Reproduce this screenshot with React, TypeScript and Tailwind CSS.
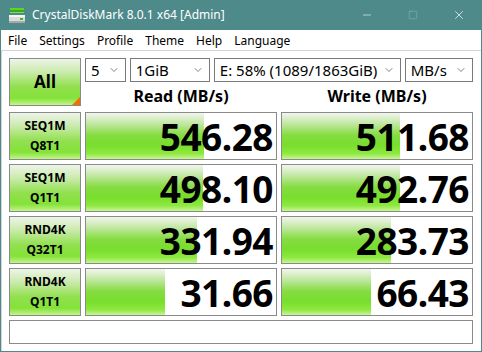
import { ChevronDown, Minus, Square, X } from "lucide-react"

const FONT = "font-['Segoe_UI','Noto_Sans','Open_Sans',sans-serif]"

interface Row {
  l1: string
  l2: string
  read: string
  write: string
  readPct: number
  writePct: number
}

const ROWS: Row[] = [
  { l1: "SEQ1M", l2: "Q8T1", read: "546.28", write: "511.68", readPct: 62, writePct: 62 },
  { l1: "SEQ1M", l2: "Q1T1", read: "498.10", write: "492.76", readPct: 61.5, writePct: 62 },
  { l1: "RND4K", l2: "Q32T1", read: "331.94", write: "283.73", readPct: 58.5, writePct: 57.5 },
  { l1: "RND4K", l2: "Q1T1", read: "31.66", write: "66.43", readPct: 41.5, writePct: 47 },
]

const GREEN_BAR =
  "bg-[linear-gradient(to_bottom,#f2f6ef_0%,#c4e8a6_22%,#86dc42_48%,#78de2c_70%,#8ee840_88%,#c8f596_100%)]"
const GREEN_LABEL =
  "bg-[linear-gradient(to_bottom,#eef4ea_0%,#c8eaa8_30%,#92e050_60%,#84e238_85%,#c4f48e_100%)]"

function Drop({ text, w }: { text: string; w: string }) {
  return (
    <div
      className={`${w} h-[24px] border border-[#7a7a7a] bg-white flex items-center justify-between pl-[5px] pr-[5px] text-[15px] text-black`}
    >
      <span className="leading-none">{text}</span>
      <ChevronDown className="w-[12px] h-[12px] text-[#555]" strokeWidth={1.5} />
    </div>
  )
}

function Cell({ value, pct }: { value: string; pct: number }) {
  return (
    <div className="relative h-[48px] border border-[#8a8a8a] bg-white">
      <div className={`absolute left-0 top-0 bottom-0 ${GREEN_BAR}`} style={{ width: `${pct}%` }} />
      <div className="relative h-full flex items-center justify-end pr-[3px] pt-[2px] text-[37px] font-bold text-black leading-[44px] tracking-[-0.5px]">
        {value}
      </div>
    </div>
  )
}

function DiskIcon() {
  return (
    <svg width="17" height="17" viewBox="0 0 17 17">
      <rect x="1" y="1" width="14" height="2" fill="#5fd32c" />
      <rect x="1" y="3" width="14" height="2" fill="#3aa81a" />
      <rect x="1" y="5" width="14" height="1" fill="#7be04a" />
      <rect x="0" y="8" width="16" height="8" rx="1" fill="#dcdcdc" />
      <rect x="0" y="8" width="16" height="2" fill="#f4f4f4" />
      <rect x="0" y="14" width="16" height="2" fill="#a8a8a8" />
      <rect x="11" y="11" width="3" height="2" fill="#35c020" />
    </svg>
  )
}

export default function App() {
  return (
    <div className={`w-[482px] h-[352px] bg-[#4f8a8b] flex flex-col ${FONT}`}>
      {/* Title bar */}
      <div className="h-[30px] flex items-center text-white">
        <div className="pl-[9px] pr-[6px] pt-[1px]">
          <DiskIcon />
        </div>
        <span className="text-[12px] leading-none">CrystalDiskMark 8.0.1 x64 [Admin]</span>
        <div className="ml-auto flex h-full">
          <div className="w-[46px] flex items-center justify-center">
            <Minus className="w-[12px] h-[12px]" strokeWidth={1.2} />
          </div>
          <div className="w-[46px] flex items-center justify-center">
            <Square className="w-[10px] h-[10px] text-[#8fb4b5]" strokeWidth={1.3} />
          </div>
          <div className="w-[46px] flex items-center justify-center">
            <X className="w-[14px] h-[14px]" strokeWidth={1.2} />
          </div>
        </div>
      </div>

      {/* Body */}
      <div className="flex-1 mx-[1px] mb-[1px] bg-white flex flex-col">
        <div className="h-[20px] flex items-center gap-[12px] pl-[7px] pt-[2px] text-[12px] text-black">
          <span>File</span>
          <span>Settings</span>
          <span>Profile</span>
          <span>Theme</span>
          <span>Help</span>
          <span>Language</span>
        </div>
        <div className="flex-1 border-t border-l border-[#d4d4d4] pl-[7px] pt-[7px]">
          <div className="grid grid-cols-[72px_192px_192px] gap-[4px]">
            <div
              className={`relative h-[48px] border border-[#8a8a8a] ${GREEN_LABEL} flex items-center justify-center text-[17px] font-bold text-black`}
            >
              All
              <div className="absolute right-0 bottom-0 w-0 h-0 border-l-[8px] border-l-transparent border-b-[8px] border-b-[#f07000]" />
            </div>
            <div className="col-span-2 flex flex-col">
              <div className="flex gap-[4px]">
                <Drop text="5" w="w-[41px]" />
                <Drop text="1GiB" w="w-[81px]" />
                <Drop text="E: 58% (1089/1863GiB)" w="w-[189px]" />
                <Drop text="MB/s" w="w-[69px]" />
              </div>
              <div className="flex-1 grid grid-cols-2 gap-[4px] items-center text-[16px] font-bold text-black">
                <div className="text-center pt-[2px]">Read (MB/s)</div>
                <div className="text-center pt-[2px]">Write (MB/s)</div>
              </div>
            </div>

            {ROWS.map((r) => (
              <div key={r.l1 + r.l2} className="contents">
                <div
                  className={`h-[48px] border border-[#8a8a8a] ${GREEN_LABEL} flex flex-col items-center justify-center text-[12px] font-bold text-black leading-[20px]`}
                >
                  <span>{r.l1}</span>
                  <span>{r.l2}</span>
                </div>
                <Cell value={r.read} pct={r.readPct} />
                <Cell value={r.write} pct={r.writePct} />
              </div>
            ))}

            <div className="col-span-3 h-[24px] border border-[#8a8a8a] bg-white" />
          </div>
        </div>
      </div>
    </div>
  )
}
